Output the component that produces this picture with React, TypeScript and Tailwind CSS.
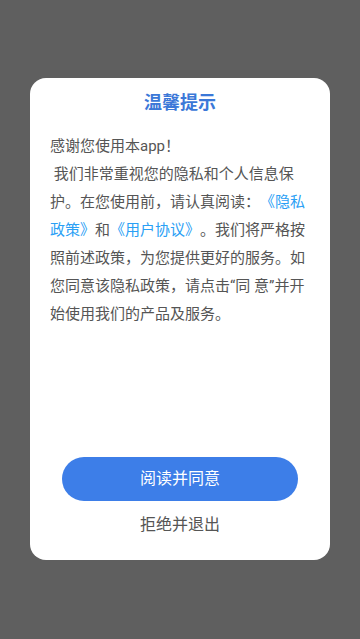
import React from "react";

const App = () => {
  return (
    <div className="w-full h-[639px] bg-[#5f5f5f] flex flex-col items-center pt-[78px] font-['Roboto','Noto_Sans_CJK_SC',sans-serif]">
      <div className="w-[300px] h-[482px] bg-white rounded-[16px] flex flex-col">
        <h1 className="pt-[12px] text-center text-[18px] leading-[26px] font-bold text-[#3b78d8]">
          温馨提示
        </h1>
        <div className="mt-[16px] pl-[20px] pr-[22px] text-[15px] leading-[28px] text-[#555555] [text-spacing-trim:space-all]">
          <p>感谢您使用本app！</p>
          <p>
            {"\u00a0"}我们非常重视您的隐私和个人信息保护。在您使用前，请认真阅读：
            <span className="text-[#2aa0f5]">《隐私政策》</span>和
            <span className="text-[#2aa0f5]">《用户协议》</span>
            。我们将严格按照前述政策，为您提供更好的服务。如您同意该隐私政策，请点击“同 意”并开始使用我们的产品及服务。
          </p>
        </div>
        <div className="flex-1" />
        <div className="flex flex-col items-center pb-[23px]">
          <button className="w-[236px] h-[44px] rounded-full bg-[#3d7ee8] text-white text-[16px]">
            阅读并同意
          </button>
          <button className="mt-[12px] h-[24px] leading-[24px] text-[16px] text-[#555555]">
            拒绝并退出
          </button>
        </div>
      </div>
    </div>
  );
};

export default App;
